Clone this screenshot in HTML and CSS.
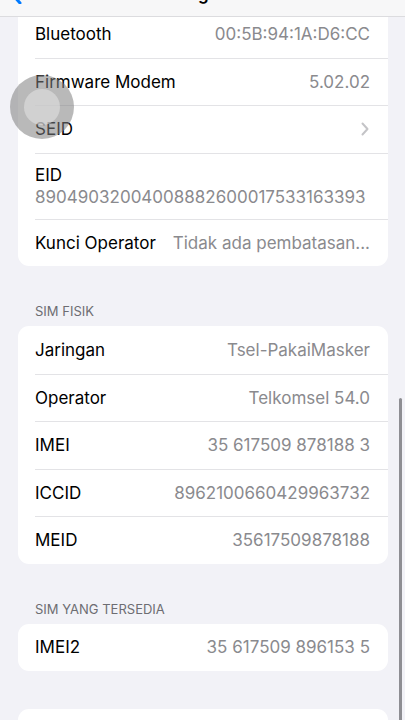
FILE: index.html
```html
<!DOCTYPE html>
<html>
<head>
  <title>Mengenai</title>
  <link rel="stylesheet" href="styles.css">
</head>
<body>
  <div class="navbar">
    <svg class="back" width="12" height="20" viewBox="0 0 12 20">
      <path d="M10 1 L2 10 L10 19" fill="none" stroke="#007aff" stroke-width="3" stroke-linecap="round" stroke-linejoin="round"/>
    </svg>
    <div class="nav-title">Mengenai</div>
  </div>

  <div class="content">
    <div class="group group-top">
      <div class="row">
        <span class="label">Bluetooth</span>
        <span class="value">00:5B:94:1A:D6:CC</span>
      </div>
      <div class="row">
        <span class="label">Firmware Modem</span>
        <span class="value">5.02.02</span>
      </div>
      <div class="row">
        <span class="label">SEID</span>
        <svg class="chevron" width="8" height="14" viewBox="0 0 8 14">
          <path d="M1.5 1.5 L6.5 7 L1.5 12.5" fill="none" stroke="#c4c4c7" stroke-width="2" stroke-linecap="round" stroke-linejoin="round"/>
        </svg>
      </div>
      <div class="row row-stack">
        <span class="label">EID</span>
        <span class="value">89049032004008882600017533163393</span>
      </div>
      <div class="row">
        <span class="label">Kunci Operator</span>
        <span class="value value-cut">Tidak ada pembatasan...</span>
      </div>
    </div>

    <div class="section-title">SIM Fisik</div>
    <div class="group">
      <div class="row">
        <span class="label">Jaringan</span>
        <span class="value">Tsel-PakaiMasker</span>
      </div>
      <div class="row">
        <span class="label">Operator</span>
        <span class="value">Telkomsel 54.0</span>
      </div>
      <div class="row">
        <span class="label">IMEI</span>
        <span class="value">35 617509 878188 3</span>
      </div>
      <div class="row">
        <span class="label">ICCID</span>
        <span class="value">8962100660429963732</span>
      </div>
      <div class="row">
        <span class="label">MEID</span>
        <span class="value">35617509878188</span>
      </div>
    </div>

    <div class="section-title">SIM yang tersedia</div>
    <div class="group">
      <div class="row">
        <span class="label">IMEI2</span>
        <span class="value">35 617509 896153 5</span>
      </div>
    </div>

    <div class="group group-spaced">
      <div class="row"></div>
    </div>
  </div>

  <div class="touch"><div class="touch-inner"></div></div>
  <div class="scrollbar"></div>
</body>
</html>
```

FILE: styles.css
```css
body {
  margin: 0;
  background-color: #f2f2f7;
  font-family: Inter, "Noto Sans", sans-serif;
  color: #000;
  overflow: hidden;
  height: 720px;
  position: relative;
}

.navbar {
  position: absolute;
  top: 0;
  left: 0;
  right: 0;
  height: 16px;
  background-color: #f7f7f8;
  border-bottom: 1px solid #dcdcdf;
  overflow: hidden;
  z-index: 2;
}

.back {
  position: absolute;
  left: 10px;
  top: -16px;
}

.nav-title {
  text-align: center;
  font-size: 17px;
  font-weight: 600;
  line-height: 22px;
  margin-top: -17px;
}

.content {
  padding: 10px 17px 40px 18px;
}

.group {
  background-color: #fff;
  border-radius: 11px;
  overflow: hidden;
}

.group-top {
  border-top-left-radius: 0;
  border-top-right-radius: 0;
}

.group-spaced {
  margin-top: 38px;
}

.row {
  display: flex;
  align-items: center;
  justify-content: space-between;
  gap: 10px;
  height: 47.5px;
  margin-left: 17px;
  padding-right: 18px;
  border-top: 1px solid #e3e3e6;
  box-sizing: border-box;
  font-size: 17px;
}

.row:first-child {
  border-top: none;
}

.row-stack {
  flex-direction: column;
  align-items: flex-start;
  justify-content: center;
  gap: 2px;
  height: 66px;
}

.label {
  white-space: nowrap;
}

.value {
  color: #8a8a8e;
  white-space: nowrap;
}

.value-cut {
  overflow: hidden;
  text-overflow: ellipsis;
  min-width: 0;
}

.chevron {
  margin-right: 1px;
}

.section-title {
  font-size: 13px;
  text-transform: uppercase;
  color: #6d6d72;
  margin: 37px 0 7px 17px;
  line-height: 16px;
}

.touch {
  position: absolute;
  left: 10px;
  top: 75px;
  width: 64px;
  height: 64px;
  border-radius: 50%;
  background-color: rgba(128, 128, 128, 0.55);
  display: flex;
  align-items: center;
  justify-content: center;
}

.touch-inner {
  width: 36px;
  height: 36px;
  border-radius: 50%;
  background-color: rgba(225, 225, 225, 0.6);
}

.scrollbar {
  position: absolute;
  right: 3px;
  top: 398px;
  width: 3px;
  height: 330px;
  border-radius: 2px;
  background-color: #8e8e93;
}
```
